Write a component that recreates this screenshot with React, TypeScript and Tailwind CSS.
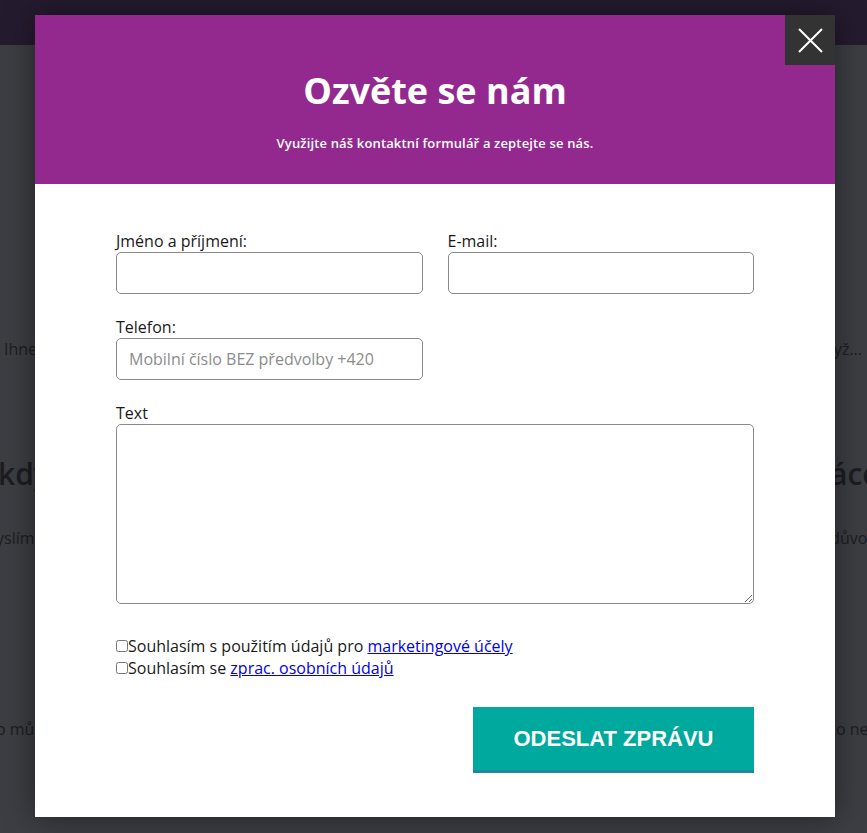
import { useState } from 'react';

const bgRows = [
    { top: 'mt-[292px]', left: 'Ihned vám odpovíme', right: 'a to i o víkendu, když...', size: 'text-[16px]', ml: 'ml-[4px]', mr: 'mr-[5px]' },
    { top: 'mt-[90px]', left: 'kdykoliv', right: 'Nabídka na míru a výhodné splácení', size: 'text-[30px] font-semibold', ml: 'ml-[-2px]', mr: 'mr-[-40px]' },
    { top: 'mt-[30px]', left: 'yslíme na vás', right: 'a vrátíme peníze bez udání důvodů', size: 'text-[16px]', ml: 'ml-[-4px]', mr: 'mr-[-20px]' },
    { top: 'mt-[167px]', left: 'o můžete', right: 'a co nelze', size: 'text-[16px]', ml: 'ml-[-4px]', mr: 'mr-[-22px]' },
];

function Field({ label, placeholder }: { label: string; placeholder?: string }) {
    return (
        <label className="flex flex-col">
            <span className="text-[16px] leading-[22px] text-[#1a1a1a]">{label}</span>
            <input
                className="h-[42px] w-full rounded-[5px] border border-[#8a8a8a] bg-white px-[12px] text-[16px] text-[#333] outline-none placeholder:text-[#8c8c8c]"
                placeholder={placeholder}
                type="text"
            />
        </label>
    );
}

export default function App() {
    const [marketing, setMarketing] = useState(false);
    const [gdpr, setGdpr] = useState(false);

    return (
        <div className="relative h-[833px] w-[867px] overflow-hidden bg-[#3c3e43] font-['Open_Sans',sans-serif]">
            {/* page behind the overlay */}
            <div className="h-[45px] bg-[#251b2f]" />
            {bgRows.map((row) => (
                <div
                    className={`${row.top} flex justify-between overflow-hidden whitespace-nowrap text-[#1c1d21] ${row.size}`}
                    key={row.left}
                >
                    <span className={row.ml}>{row.left}</span>
                    <span className={row.mr}>{row.right}</span>
                </div>
            ))}

            {/* modal */}
            <div className="absolute left-[35px] top-[15px] flex h-[802px] w-[800px] flex-col bg-white shadow-[0_0_30px_rgba(0,0,0,0.45)]">
                <button
                    aria-label="Zavřít"
                    className="absolute right-0 top-0 flex h-[50px] w-[50px] items-center justify-center bg-[#333333]"
                    type="button"
                >
                    <svg fill="none" height="25" stroke="#ffffff" strokeWidth="2" viewBox="0 0 25 25" width="25">
                        <path d="M1 1L24 24M24 1L1 24" />
                    </svg>
                </button>

                <div className="flex h-[169px] flex-col items-center bg-[#93298e] pt-[52px] text-white">
                    <h1 className="text-[36px] font-bold leading-[48px]">Ozvěte se nám</h1>
                    <p className="mt-[19px] text-[13px] font-semibold leading-[18px] tracking-[0.15px]">
                        Využijte náš kontaktní formulář a zeptejte se nás.
                    </p>
                </div>

                <form className="flex flex-col px-[81px] pt-[46px]" onSubmit={(e) => e.preventDefault()}>
                    <div className="grid grid-cols-2 gap-x-[25px] gap-y-[22px]">
                        <Field label="Jméno a příjmení:" />
                        <Field label="E-mail:" />
                        <Field label="Telefon:" placeholder="Mobilní číslo BEZ předvolby +420" />
                    </div>

                    <label className="mt-[22px] flex flex-col">
                        <span className="text-[16px] leading-[22px] text-[#1a1a1a]">Text</span>
                        <textarea className="h-[180px] w-full rounded-[5px] border border-[#8a8a8a] bg-white p-[12px] text-[16px] outline-none" />
                    </label>

                    <div className="mt-[31px] flex flex-col text-[16px] leading-[22px] text-[#1a1a1a]">
                        <label className="flex items-center">
                            <input
                                checked={marketing}
                                className="m-0 h-[12px] w-[12px]"
                                onChange={(e) => setMarketing(e.target.checked)}
                                type="checkbox"
                            />
                            <span>
                                Souhlasím s použitím údajů pro{' '}
                                <a className="text-[#0000ee] underline" href="#">
                                    marketingové účely
                                </a>
                            </span>
                        </label>
                        <label className="flex items-center">
                            <input
                                checked={gdpr}
                                className="m-0 h-[12px] w-[12px]"
                                onChange={(e) => setGdpr(e.target.checked)}
                                type="checkbox"
                            />
                            <span>
                                Souhlasím se{' '}
                                <a className="text-[#0000ee] underline" href="#">
                                    zprac. osobních údajů
                                </a>
                            </span>
                        </label>
                    </div>

                    <div className="mt-[28px] flex justify-end">
                        <button
                            className="h-[66px] w-[281px] border-0 border-b-[3px] border-solid border-[#1c8a9c] bg-[#00a99d] font-['Liberation_Sans',Arial,sans-serif] text-[22px] font-bold text-white"
                            type="submit"
                        >
                            ODESLAT ZPRÁVU
                        </button>
                    </div>
                </form>
            </div>
        </div>
    );
}
